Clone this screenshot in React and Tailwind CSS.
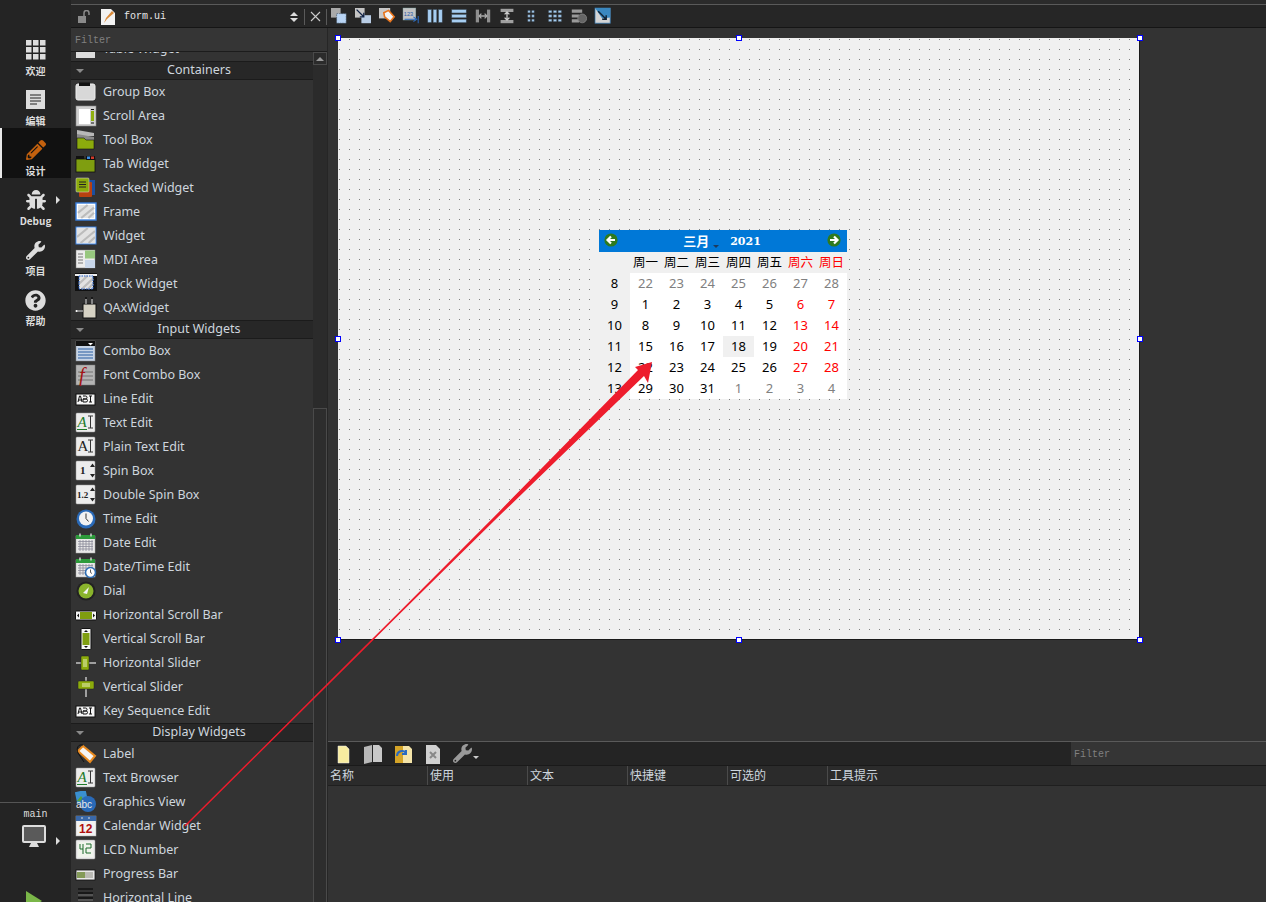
import React from 'react';
import { FaBug, FaWrench, FaQuestionCircle, FaPencilAlt } from 'react-icons/fa';

const S = ({ children, size = 22, className = '' }) => (
  <svg width={size} height={size} viewBox="0 0 22 22" className={`shrink-0 ${className}`}>{children}</svg>
);

const hatch = (x, y, w, h) => (
  <>
    <rect x={x} y={y} width={w} height={h} fill="#e2e2e2" />
    <path d={`M${x} ${y + h * 0.6}L${x + w * 0.6} ${y}M${x + w * 0.2} ${y + h}L${x + w} ${y + h * 0.2}M${x + w * 0.65} ${y + h}L${x + w} ${y + h * 0.6}`} stroke="#bcbcbc" strokeWidth="2.2" />
  </>
);

const Card = ({ children }) => (
  <S>
    <rect x="1" y="1" width="19" height="19" rx="1" fill="#ececec" stroke="#999" strokeWidth=".5" />
    {children}
  </S>
);

const AI = ({ green }) => (
  <Card>
    <text x="2.5" y="15" fontFamily="Liberation Serif" fontSize="15" fontStyle={green ? 'italic' : 'normal'} fill={green ? '#1f7a2a' : '#222'}>A</text>
    <path d="M13 4h5M15.5 4v12M13 16h5" stroke="#333" strokeWidth="1" fill="none" />
    {green && <path d="M2 17.5h10" stroke="#1f7a2a" strokeWidth="1" />}
  </Card>
);

const LineEditIcon = () => (
  <S>
    <rect x="1" y="6" width="19" height="11" fill="#f4f4f4" stroke="#111" />
    <path d="M3 14l1.5-6h1l1.5 6M3.6 12h3M8 8h2.5a1 1 0 010 3H8m0 0h3a1.2 1.2 0 010 3H8zM14 8h3M15.5 8v6M14 14h3" stroke="#111" strokeWidth="1" fill="none" />
  </S>
);

const Spin = ({ label }) => (
  <Card>
    <text x={label.length > 1 ? 2 : 5} y="14" fontFamily="Liberation Serif" fontSize={label.length > 1 ? 9 : 11} fontWeight="bold" fill="#222">{label}</text>
    <path d="M15 7l2.5-3.5L20 7zM15 14l2.5 3.5L20 14z" fill="#222" />
  </Card>
);

const CalendarSmall = ({ clock }) => (
  <S>
    <rect x="1" y="4" width="19" height="17" fill="#e8e8e8" stroke="#aaa" strokeWidth=".5" />
    <rect x="1" y="3" width="19" height="4" fill="#2c9a3a" />
    <path d="M5 1.5v3M16 1.5v3" stroke="#ddd" strokeWidth="1.4" />
    <path d="M3 9.5h15M3 12h15M3 14.5h15M3 17h15M5 8v11M8 8v11M11 8v11M14 8v11M17 8v11" stroke="#8a8a9a" strokeWidth=".8" />
    {clock && (<><circle cx="15.5" cy="16.5" r="5" fill="#fff" stroke="#2e6db4" strokeWidth="1.6" /><path d="M15.5 13.5v3l1.5 1" stroke="#333" strokeWidth=".8" fill="none" /></>)}
  </S>
);

const icons = {
  table: <S><rect x="1" y="2" width="19" height="18" fill="#ddd" /></S>,
  group: <S><rect x="1" y="3" width="19" height="16" rx="2" fill="#d8d8d8" stroke="#eee" /><rect x="4" y="1.5" width="11" height="3.5" fill="#111" /></S>,
  scroll: <S><rect x="1" y="1" width="20" height="20" fill="#d0d0d0" stroke="#888" strokeWidth=".6" /><rect x="4" y="4" width="11" height="15" fill="#fff" /><rect x="16" y="6" width="3" height="10" fill="#8fb010" /><path d="M16 4.5h3M16 18h3" stroke="#111" /></S>,
  tool: <S><path d="M2 1l17 3v3H2z" fill="#b8b8b8" /><path d="M2 5l17 3v3H2z" fill="#8a8a8a" /><path d="M2 9h7l2 2h8v9H2z" fill="#8cab0c" stroke="#111" strokeWidth=".6" /></S>,
  tab: <S><rect x="1" y="6" width="19" height="13" fill="#7f9e10" stroke="#111" strokeWidth=".8" /><rect x="11" y="3" width="9" height="4" fill="#111" /><rect x="12" y="3.5" width="3" height="2.5" fill="#3a8ee0" /><rect x="16" y="3.5" width="3" height="2.5" fill="#d23a2a" /><rect x="1" y="3" width="8" height="3" fill="#111" /></S>,
  stacked: <S><rect x="7" y="3" width="13" height="15" fill="#1c4fa0" /><rect x="4" y="5" width="13" height="15" rx="1" fill="#b84010" /><rect x="1" y="1" width="13" height="14" rx="1" fill="#8cab0c" stroke="#ddd" strokeWidth=".5" /><path d="M4 5h7M4 7.5h7M4 10h7" stroke="#222" /></S>,
  frame: <S><rect x="1" y="2" width="20" height="17" fill="#fff" stroke="#3a80e0" strokeWidth="1.4" />{hatch(3, 4, 16, 13)}</S>,
  widget: <S><rect x="1" y="2" width="20" height="17" fill="#fff" stroke="#3a80e0" strokeWidth="1" />{hatch(2, 3, 18, 15)}</S>,
  mdi: <S><rect x="1" y="1" width="19" height="18" fill="#ececec" stroke="#777" strokeWidth=".5" /><rect x="10" y="1.5" width="10" height="8" fill="#97c77e" /><rect x="10" y="11" width="10" height="8" fill="#c8d6ea" /><path d="M3 5h5M3 8h5M3 11h5M3 14h5" stroke="#777" /></S>,
  dock: <S><rect x="0" y="0" width="22" height="18" fill="#111" /><rect x="0" y="1" width="22" height="2" fill="#eee" />{hatch(4, 3, 14, 13)}<rect x="4" y="3" width="14" height="13" fill="none" stroke="#1f5fd0" strokeDasharray="1.5 1" /></S>,
  qax: <S><rect x="8" y="7" width="13" height="14" fill="#d6d2c4" stroke="#111" /><path d="M11 2v5M17 2v5M1 14h7" stroke="#ddd" /><circle cx="1.5" cy="14" r="1" fill="#fff" /><path d="M10 1h2M16 1h2" stroke="#111" strokeWidth="1.5" /></S>,
  combo: <S><rect x="1" y="1" width="19" height="20" fill="#c6d4e6" stroke="#888" strokeWidth=".5" /><rect x="1" y="1" width="19" height="5" fill="#111" /><path d="M13 3h5l-2.5 2.5z" fill="#fff" /><path d="M3 9h15M3 12h15M3 15h15M3 18h15" stroke="#5d84b8" strokeWidth="1.4" /></S>,
  font: <S><rect x="1" y="1" width="19" height="20" fill="#b4b4b4" stroke="#777" strokeWidth=".5" /><path d="M3 8h15M3 12h15M3 16h15" stroke="#888" strokeWidth="1.4" /><text x="4" y="18" fontFamily="Liberation Serif" fontSize="20" fontStyle="italic" fill="#a41414">f</text></S>,
  line: <LineEditIcon />,
  text: <AI green />,
  plain: <AI />,
  spin: <Spin label="1" />,
  dspin: <Spin label="1.2" />,
  time: <S><circle cx="11" cy="11" r="9.5" fill="#2a6ab8" /><circle cx="11" cy="10.5" r="7" fill="#f2f2f2" /><path d="M11 5.5v5l2.5 3" stroke="#333" strokeWidth="1" fill="none" /></S>,
  date: <CalendarSmall />,
  datetime: <CalendarSmall clock />,
  dial: <S><circle cx="11" cy="11" r="9.5" fill="#222" /><circle cx="11" cy="11" r="7.5" fill="#8ab42c" /><path d="M8 13l6-6-2 7z" fill="#f4f4f4" /></S>,
  hscroll: <S><rect x="0.5" y="7" width="21" height="9" rx="1" fill="#f4f4f4" stroke="#111" /><rect x="5" y="8" width="12" height="7" fill="#7f9e10" /><path d="M2 11.5l2-2v4zM20 11.5l-2-2v4z" fill="#111" /></S>,
  vscroll: <S><rect x="6" y="0.5" width="10" height="21" rx="1" fill="#f4f4f4" stroke="#111" /><rect x="7.5" y="5" width="7" height="12" fill="#7f9e10" /><path d="M11 2l2 2H9zM11 20l2-2H9z" fill="#111" /></S>,
  hslider: <S><path d="M1 11h20" stroke="#bbb" strokeWidth="1.6" /><rect x="6" y="4" width="8" height="14" rx="1" fill="#8cab0c" stroke="#222" strokeWidth=".5" /><path d="M9 7v8M11 7v8" stroke="#e8f0c0" /></S>,
  vslider: <S><path d="M11 1v20" stroke="#bbb" strokeWidth="1.6" /><rect x="3" y="5" width="16" height="8" rx="1" fill="#8cab0c" stroke="#222" strokeWidth=".5" /><path d="M7 8h8M7 10h8" stroke="#e8f0c0" /></S>,
  label: <S><path d="M8 3l12 10-5 6L3 8z" fill="#f4f4f4" stroke="#e88a20" strokeWidth="2" /><path d="M8 2C3 1 1 5 3 10l6 9" fill="none" stroke="#111" strokeWidth="1" /></S>,
  graphics: <S><rect x="1" y="0" width="11" height="12" fill="#3a90d0" transform="rotate(-12 6 6)" /><path d="M2 10l4-5 4 6z" fill="#5aa030" /><circle cx="13" cy="13" r="8" fill="#2a6ab8" /><text x="1" y="17" fontFamily="Liberation Sans" fontSize="10" fill="#e8e8e8">abc</text></S>,
  calendar: <S><rect x="1" y="1" width="20" height="20" fill="#f2f2f2" stroke="#aaa" strokeWidth=".5" /><rect x="1" y="1" width="20" height="5" fill="#3a68a8" /><path d="M6 3h2M13 3h2" stroke="#ddd" /><text x="4" y="18" fontFamily="Liberation Sans" fontWeight="bold" fontSize="12" fill="#b01010">12</text></S>,
  lcd: <Card><rect x="3" y="3" width="15" height="15" fill="#f0f4ec" /><path d="M5 5v5h3M8 5v10M11 5h5v4h-5v5h5" stroke="#1a6a2a" strokeWidth="1" fill="none" /></Card>,
  progress: <S><rect x="1" y="7" width="19" height="10" fill="#e8e8e8" stroke="#111" strokeWidth=".8" /><path d="M3 9v6M5 9v6M7 9v6M9 9v6" stroke="#5a7a1c" strokeWidth="1.4" /><path d="M11 9v6M13 9v6M15 9v6M17 9v6" stroke="#a8a8a0" strokeWidth="1.4" /></S>,
  hline: <S><path d="M3 2h15" stroke="#111" strokeWidth="1.4" /><path d="M3 6h15M3 11h15M3 16h15" stroke="#111" strokeWidth="1.4" /><path d="M3 8h15M3 13h15" stroke="#777" /></S>,
};

const groups = [
  ['Containers', [
    ['Group Box', 'group'], ['Scroll Area', 'scroll'], ['Tool Box', 'tool'], ['Tab Widget', 'tab'], ['Stacked Widget', 'stacked'],
    ['Frame', 'frame'], ['Widget', 'widget'], ['MDI Area', 'mdi'], ['Dock Widget', 'dock'], ['QAxWidget', 'qax'],
  ]],
  ['Input Widgets', [
    ['Combo Box', 'combo'], ['Font Combo Box', 'font'], ['Line Edit', 'line'], ['Text Edit', 'text'], ['Plain Text Edit', 'plain'],
    ['Spin Box', 'spin'], ['Double Spin Box', 'dspin'], ['Time Edit', 'time'], ['Date Edit', 'date'], ['Date/Time Edit', 'datetime'],
    ['Dial', 'dial'], ['Horizontal Scroll Bar', 'hscroll'], ['Vertical Scroll Bar', 'vscroll'], ['Horizontal Slider', 'hslider'],
    ['Vertical Slider', 'vslider'], ['Key Sequence Edit', 'line'],
  ]],
  ['Display Widgets', [
    ['Label', 'label'], ['Text Browser', 'text'], ['Graphics View', 'graphics'], ['Calendar Widget', 'calendar'],
    ['LCD Number', 'lcd'], ['Progress Bar', 'progress'], ['Horizontal Line', 'hline'],
  ]],
];

const Row = ({ name, icon }) => (
  <div className="flex h-6 shrink-0 items-center pl-1">
    {icons[icon]}
    <span className="ml-[6px] text-[12.5px] text-[#ced6de]">{name}</span>
  </div>
);

const Header = ({ title }) => (
  <div className="relative flex h-[19px] shrink-0 items-center justify-center border-y border-[#1b1b1b] bg-[#272727] pl-[14px] text-[12.5px] text-[#ced6de]">
    <span className="absolute left-[5px] top-[7px] h-0 w-0 border-x-[4px] border-t-[4px] border-x-transparent border-t-[#8a8a8a]" />
    {title}
  </div>
);

const SideItem = ({ icon, label, active, arrow }) => (
  <div className={`relative flex h-[50px] flex-col items-center pt-[10px] ${active ? 'border-l-2 border-[#e8e8e8] bg-[#111111] pr-[2px]' : ''}`}>
    <div className="flex h-[24px] items-center justify-center">{icon}</div>
    <span className="mt-[3px] text-[10px] font-bold leading-[12px] text-[#dddddd]">{label}</span>
    {arrow && <span className="absolute left-[56px] top-[18px] h-0 w-0 border-y-[4px] border-l-[4px] border-y-transparent border-l-[#dddddd]" />}
  </div>
);

const Handle = ({ className }) => (
  <span className={`absolute h-[6px] w-[6px] border border-[#0000ff] bg-white ${className}`} />
);

const toolbarIcons = [
  <S key="0"><rect x="1" y="1" width="12" height="12" fill="#aaa" /><rect x="8" y="8" width="12" height="12" fill="#b8d4f4" stroke="#345" strokeDasharray="2 1" strokeWidth=".7" /></S>,
  <S key="1"><rect x="1" y="1" width="12" height="12" fill="#c4c4c4" /><rect x="9" y="10" width="12" height="10" fill="#b8cce4" /><path d="M3 3l9 9M12 7v5H7" stroke="#124" strokeWidth="1.6" fill="none" /></S>,
  <S key="2"><rect x="1" y="1" width="14" height="13" fill="#c8c8c8" /><path d="M7 7l6-3 7 8-5 6-7-6z" fill="#f4f4f4" stroke="#e8741c" strokeWidth="2" /></S>,
  <S key="3"><rect x="1" y="1" width="16" height="15" fill="#c4c4c4" stroke="#8aa" strokeWidth=".6" /><text x="2" y="11" fontFamily="Liberation Sans" fontSize="7" fill="#2a5aa8">123</text><path d="M3 15h14M14 12l4 3-4 3M20 11v9" stroke="#2a6ac0" strokeWidth="1.3" fill="none" /></S>,
  <S key="4"><rect x="2" y="3" width="4.5" height="16" fill="#a6cdf0" stroke="#456" strokeWidth=".6" /><rect x="8.7" y="3" width="4.5" height="16" fill="#a6cdf0" stroke="#456" strokeWidth=".6" /><rect x="15.5" y="3" width="4.5" height="16" fill="#a6cdf0" stroke="#456" strokeWidth=".6" /></S>,
  <S key="5"><rect x="2" y="3" width="18" height="4.2" fill="#a6cdf0" stroke="#456" strokeWidth=".6" /><rect x="2" y="9" width="18" height="4.2" fill="#a6cdf0" stroke="#456" strokeWidth=".6" /><rect x="2" y="15" width="18" height="4.2" fill="#a6cdf0" stroke="#456" strokeWidth=".6" /></S>,
  <S key="6"><rect x="2" y="3" width="4" height="16" fill="#8f8f8f" /><rect x="16" y="3" width="4" height="16" fill="#8f8f8f" /><path d="M6 11h10M9 8l-3 3 3 3M13 8l3 3-3 3" stroke="#aaa" strokeWidth="1.6" fill="none" /></S>,
  <S key="7"><rect x="3" y="2" width="16" height="4" fill="#a0a0a0" /><rect x="3" y="16" width="16" height="4" fill="#a0a0a0" /><path d="M11 6v10M8 9l3-3 3 3M8 13l3 3 3-3" stroke="#ccc" strokeWidth="1.6" fill="none" /></S>,
  <S key="8"><path d="M7 4h3v3H7zM12 4h3v3h-3zM7 9.5h3v3H7zM12 9.5h3v3h-3zM7 15h3v3H7zM12 15h3v3h-3z" fill="#a6cdf0" stroke="#456" strokeWidth=".4" /></S>,
  <S key="9"><path d="M3 4h4v3H3zM9 4h4v3H9zM15 4h4v3h-4zM3 9.5h4v3H3zM9 9.5h4v3H9zM15 9.5h4v3h-4zM3 15h4v3H3zM9 15h4v3H9zM15 15h4v3h-4z" fill="#a6cdf0" stroke="#456" strokeWidth=".4" /></S>,
  <S key="10"><path d="M2 3h13v4H2zM2 9h9v4H2zM2 15h9v4H2z" fill="#9a9a9a" /><circle cx="15" cy="14" r="5.5" fill="#666" stroke="#888" /></S>,
  <S key="11"><rect x="1" y="1" width="19" height="19" fill="#d4d4d4" stroke="#3a7ab0" /><path d="M1 1h19v12L10 14z" fill="#3a88c0" /><path d="M5 5l10 10M15 10v5h-5" stroke="#123" strokeWidth="1.8" fill="none" /></S>,
];

const bottomIcons = [
  <S key="a" size={22}><path d="M6 3h8l3 3v14H6z" fill="#f8eca0" stroke="#eee" strokeWidth=".5" /></S>,
  <S key="b" size={22}><path d="M2 4l8-2v17l-8 2z" fill="#b8b8b8" /><path d="M11 2h6l3 3v14h-9z" fill="#c8c8c8" /></S>,
  <S key="c" size={22}><path d="M3 3h8v17H3z" fill="#d4a428" /><path d="M11 3h6l3 3v14h-9z" fill="#f4e4a8" /><path d="M5 13a5 5 0 019-3M14 7v4h-4" stroke="#2a6ac0" strokeWidth="2" fill="none" /></S>,
  <S key="d" size={22}><path d="M4 2h10l4 4v15H4z" fill="#d0d0d0" /><path d="M8 9l6 6M14 9l-6 6" stroke="#888" strokeWidth="2" /></S>,
];

const week = [
  [8, [22, 23, 24, 25, 26, 27, 28], 'all'],
  [9, [1, 2, 3, 4, 5, 6, 7], ''],
  [10, [8, 9, 10, 11, 12, 13, 14], ''],
  [11, [15, 16, 17, 18, 19, 20, 21], ''],
  [12, [22, 23, 24, 25, 26, 27, 28], ''],
  [13, [29, 30, 31, 1, 2, 3, 4], 'tail'],
];

const Nav = ({ className, flip }) => (
  <svg width="14" height="14" viewBox="0 0 14 14" className={`absolute top-[3px] ${className}`}>
    <circle cx="7" cy="7" r="6.6" fill="#2f7a1e" />
    <path d={flip ? 'M11 7H4M7 3.5L3.5 7 7 10.5' : 'M3 7h7M7 3.5L10.5 7 7 10.5'} stroke="#fff" strokeWidth="2.2" fill="none" />
  </svg>
);

const CalendarWidget = () => (
  <div className="absolute left-[261px] top-[192px] w-[248px] font-['Noto_Sans','Noto_Sans_CJK_SC',sans-serif] text-[13px] leading-none text-black">
    <div className="relative flex h-[22px] items-center justify-center bg-[#0078d7] text-white">
      <Nav className="left-[5px]" flip />
      <span className="mb-[2px] mr-[2px] font-['Noto_Sans_CJK_SC',sans-serif] text-[13px] font-bold">三月</span>
      <span className="ml-[2px] mr-[11px] mt-[10px] h-0 w-0 border-x-[3px] border-t-[3px] border-x-transparent border-t-[#1d3a5c]" />
      <span className="mr-[2px] mt-[1px] font-['DejaVu_Serif',serif] text-[11px] font-bold">2021</span>
      <Nav className="right-[6px]" />
    </div>
    <div className="grid h-[21px] grid-cols-[31px_repeat(7,31px)] items-center bg-[#f0f0f0] text-center font-['Noto_Sans_CJK_SC',sans-serif] text-[12.5px]">
      <span />
      {['周一', '周二', '周三', '周四', '周五'].map((d) => <span key={d}>{d}</span>)}
      <span className="text-[#ff0000]">周六</span>
      <span className="text-[#ff0000]">周日</span>
    </div>
    <div className="grid grid-cols-[31px_repeat(7,31px)] text-center">
      {week.map(([no, days, kind], r) => (
        <React.Fragment key={no}>
          <span className="flex h-[21px] items-center justify-center bg-[#f0f0f0]">{no}</span>
          {days.map((d, i) => {
            const other = kind === 'all' || (kind === 'tail' && i > 2);
            const color = other ? 'text-[#808080]' : i > 4 ? 'text-[#ff0000]' : '';
            const today = r === 3 && i === 3 ? 'bg-[#f0f0f0]' : 'bg-white';
            return <span key={i} className={`flex h-[21px] items-center justify-center ${today} ${color}`}>{d}</span>;
          })}
        </React.Fragment>
      ))}
    </div>
  </div>
);

export default function App() {
  return (
    <div className="relative flex h-[902px] w-[1266px] overflow-hidden bg-[#333333] font-['Noto_Sans','Noto_Sans_CJK_SC',sans-serif]">
      {/* mode sidebar */}
      <div className="flex w-[71px] shrink-0 flex-col bg-[#242424] font-['Noto_Sans_CJK_SC',sans-serif]">
        <div className="h-[28px] shrink-0" />
        <SideItem label="欢迎" icon={
          <svg width="20" height="20" viewBox="0 0 20 20" fill="#dddddd">
            {[0, 7, 14].flatMap((y) => [0, 7, 14].map((x) => <rect key={`${x}-${y}`} x={x} y={y} width="5.5" height="5.5" />))}
          </svg>
        } />
        <SideItem label="编辑" icon={
          <svg width="20" height="20" viewBox="0 0 20 20"><rect width="19" height="19" fill="#dddddd" /><path d="M4 5h11M4 8h11M4 11h11M4 14h7" stroke="#222" /></svg>
        } />
        <SideItem active label="设计" icon={<FaPencilAlt size={20} color="#c4610e" />} />
        <SideItem arrow label="Debug" icon={<FaBug size={20} color="#dddddd" />} />
        <SideItem label="项目" icon={<FaWrench size={19} color="#dddddd" />} />
        <SideItem label="帮助" icon={<FaQuestionCircle size={21} color="#dddddd" />} />
        <div className="mt-[474px] flex flex-col items-center border-t border-[#555555]">
          <span className="mt-[5px] font-['Liberation_Mono',monospace] text-[10px] leading-[14px] text-[#dddddd]">main</span>
          <div className="relative mt-[3px] h-[50px] w-full">
            <svg width="26" height="24" viewBox="0 0 26 24" className="absolute left-[22px] top-0">
              <rect x="1" y="1" width="22" height="16" rx="1" fill="#5a5a5a" stroke="#dddddd" strokeWidth="2" />
              <path d="M9 18h6l2 4H7z" fill="#dddddd" />
            </svg>
            <span className="absolute left-[56px] top-[12px] h-0 w-0 border-y-[4px] border-l-[4px] border-y-transparent border-l-[#dddddd]" />
            <span className="absolute left-[26px] top-[66px] h-0 w-0 border-y-[10px] border-l-[16px] border-y-transparent border-l-[#7ab648]" />
          </div>
        </div>
      </div>

      <div className="flex min-w-0 flex-1 flex-col">
        {/* top toolbars */}
        <div className="h-[5px] shrink-0 border-b border-[#5a5a5a] bg-[#2b2b2b]" />
        <div className="flex h-[23px] shrink-0 items-center border-b border-[#151515] bg-[#262626]">
          <div className="flex w-[256px] shrink-0 items-center pt-[1px]">
            <svg width="14" height="14" viewBox="0 0 14 14" className="ml-[6px]">
              <rect x="1" y="6" width="8" height="7" fill="#8a8a8a" />
              <path d="M7 6V3a2.5 2.5 0 015 0v2" stroke="#8a8a8a" strokeWidth="1.5" fill="none" />
            </svg>
            <svg width="16" height="18" viewBox="0 0 16 18" className="ml-[9px]">
              <path d="M1 1h10l4 4v12H1z" fill="#f2f2f2" />
              <path d="M4 15l2-5 6-7 2 2-7 6z" fill="#d98a3a" />
            </svg>
            <span className="ml-[8px] font-['Liberation_Mono',monospace] text-[10px] text-[#e6e6e6]">form.ui</span>
            <span className="ml-auto mr-[6px] flex flex-col gap-[2px]">
              <span className="h-0 w-0 border-x-[4px] border-b-[4px] border-x-transparent border-b-[#dddddd]" />
              <span className="h-0 w-0 border-x-[4px] border-t-[4px] border-x-transparent border-t-[#dddddd]" />
            </span>
            <span className="h-[16px] w-px bg-[#5a5a5a]" />
            <svg width="11" height="11" viewBox="0 0 11 11" className="mx-[5px]"><path d="M1 1l9 9M10 1l-9 9" stroke="#cccccc" strokeWidth="1.1" /></svg>
            <span className="h-[16px] w-px bg-[#5a5a5a]" />
          </div>
          <div className="flex">
            {toolbarIcons.map((icon, i) => (
              <div key={i} className="flex w-6 items-center justify-center">
                <div className="scale-[0.8]">{icon}</div>
              </div>
            ))}
          </div>
        </div>

        <div className="flex min-h-0 flex-1">
          {/* widget box */}
          <div className="flex w-[256px] shrink-0 flex-col">
            <div className="flex h-[24px] shrink-0 items-center border-b border-[#1c1c1c] bg-[#353535] pl-[4px] pt-[2px] font-['Liberation_Mono',monospace] text-[10px] text-[#808080]">Filter</div>
            <div className="flex min-h-0 flex-1">
              <div className="w-[242px] overflow-hidden">
                <div className="-mt-[15px] flex flex-col">
                  <Row name="Table Widget" icon="table" />
                  {groups.map(([title, items]) => (
                    <React.Fragment key={title}>
                      <Header title={title} />
                      {items.map(([name, icon]) => <Row key={name} name={name} icon={icon} />)}
                    </React.Fragment>
                  ))}
                </div>
              </div>
              {/* scrollbar */}
              <div className="flex w-[14px] shrink-0 flex-col bg-[#2b2b2b]">
                <div className="flex h-[13px] items-center justify-center border border-[#4a4a4a]">
                  <span className="h-0 w-0 border-x-[4px] border-b-[4px] border-x-transparent border-b-[#9a9a9a]" />
                </div>
                <div className="mt-[343px] flex-1 border border-b-0 border-[#4a4a4a] bg-[#2d2d2d]" />
              </div>
            </div>
          </div>

          {/* form canvas + action editor */}
          <div className="flex min-w-0 flex-1 flex-col border-l border-[#262626]">
            <div className="relative h-[713px] shrink-0">
              <div className="absolute left-[10px] top-[10px] h-[602px] w-[802px] border-b border-r border-[#1a1a1a] bg-[#f0f0f0] bg-[radial-gradient(circle_at_1.5px_1.5px,#808080_0.6px,transparent_0.8px)] bg-[size:10px_10px]">
                <CalendarWidget />
                <Handle className="-left-[3px] -top-[3px]" />
                <Handle className="left-[398px] -top-[3px]" />
                <Handle className="-right-[4px] -top-[3px]" />
                <Handle className="-left-[3px] top-[298px]" />
                <Handle className="-right-[4px] top-[298px]" />
                <Handle className="-left-[3px] -bottom-[4px]" />
                <Handle className="left-[398px] -bottom-[4px]" />
                <Handle className="-right-[4px] -bottom-[4px]" />
              </div>
            </div>
            <div className="flex h-[25px] shrink-0 items-center border-y border-t-[#5a5a5a] border-b-[#1a1a1a] bg-[#242424]">
              <div className="ml-[4px] flex gap-[8px]">
                {bottomIcons}
              </div>
              <FaWrench size={19} color="#9a9a9a" className="ml-[9px]" />
              <span className="ml-[1px] mt-[8px] h-0 w-0 border-x-[3px] border-t-[3px] border-x-transparent border-t-[#cccccc]" />
              <div className="ml-auto flex h-full w-[195px] items-center bg-[#353535] pl-[3px] pt-[1px] font-['Liberation_Mono',monospace] text-[10px] text-[#808080]">Filter</div>
            </div>
            <div className="flex h-[20px] shrink-0 border-b border-[#1f1f1f] bg-[#2b2b2b] text-[12px] text-[#ced6de]">
              {['名称', '使用', '文本', '快捷键', '可选的'].map((t) => (
                <div key={t} className="flex w-[100px] items-center border-r border-[#4a4a4a] pl-[2px]">{t}</div>
              ))}
              <div className="flex w-[100px] items-center pl-[2px]">工具提示</div>
            </div>
            <div className="min-h-0 flex-1" />
          </div>
        </div>
      </div>

      {/* annotation arrow drawn over the screenshot */}
      <svg width="1266" height="902" viewBox="0 0 1266 902" className="pointer-events-none absolute left-0 top-0">
        <polygon points="184.5,825.5 399.4,611.8 498.9,511.9 572.9,436.4 638,370 635,367 652,362 648,383 644,376 577.1,440.6 501.1,514.1 400.6,613 185.5,826.5" fill="#ed1c2c" />
      </svg>
    </div>
  );
}
